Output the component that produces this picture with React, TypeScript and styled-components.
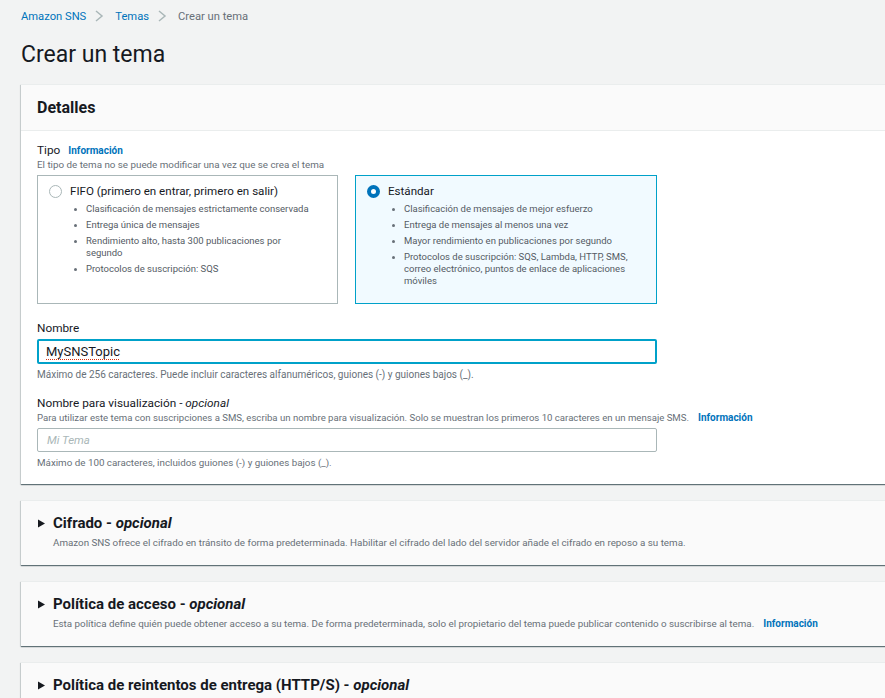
import React from "react";
import styled, { createGlobalStyle } from "styled-components";

const SANS = `"Roboto", "Liberation Sans", sans-serif`;

const GlobalStyle = createGlobalStyle`
  html, body { margin: 0; padding: 0; background: #f2f3f3; overflow: hidden; }
  body { font-family: ${SANS}; color: #16191f; }
  * { box-sizing: border-box; }
`;

const Page = styled.div`
  padding-left: 21px;
  width: 885px;
  overflow: hidden;
`;

const Breadcrumbs = styled.nav`
  display: flex;
  align-items: center;
  height: 31px;
  padding-top: 1px;
  font-size: 11.2px;
`;

const Crumb = styled.span<{ $current?: boolean }>`
  color: ${(p) => (p.$current ? "#687078" : "#0073bb")};
`;

const Chevron = styled.svg`
  width: 10px;
  height: 12px;
  margin: 0 11px 0 8px;
`;

const Title = styled.h1`
  margin: 9px 0 0;
  font-size: 23px;
  font-weight: 400;
  line-height: 30px;
  height: 44px;
  color: #16191f;
`;

const Panel = styled.section`
  width: 900px;
  background: #fff;
  box-shadow: 0 1px 1px 0 rgba(0, 28, 36, 0.5), 1px 1px 1px 0 rgba(0, 28, 36, 0.1),
    -1px 1px 1px 0 rgba(0, 28, 36, 0.1);
  border-top: 1px solid #eaeded;
`;

const PanelHeader = styled.header`
  height: 46px;
  padding: 0 16px;
  display: flex;
  align-items: center;
  background: #fafafa;
  border-bottom: 1px solid #eaeded;
  font-size: 16px;
  font-weight: 700;
`;

const PanelBody = styled.div`
  padding: 12px 16px 15px;
  width: 640px;
`;

const Label = styled.div<{ $gap?: number }>`
  font-size: 11.8px;
  line-height: 15px;
  margin-top: ${(p) => p.$gap ?? 0}px;
  display: flex;
  align-items: baseline;
  gap: 8px;
  em { font-style: italic; }
`;

const Info = styled.span`
  font-family: ${SANS};
  font-size: 10px;
  font-weight: 700;
  color: #0073bb;
`;

const Description = styled.div<{ $size?: number }>`
  font-size: ${(p) => p.$size ?? 9.8}px;
  line-height: 13px;
  color: #687078;
  white-space: nowrap;
  ${Info} { margin-left: 9px; }
`;

const Tiles = styled.div`
  display: grid;
  grid-template-columns: 301px 302px;
  gap: 17px;
  margin-top: 4px;
`;

const Tile = styled.div<{ $selected?: boolean }>`
  border: 1px solid ${(p) => (p.$selected ? "#00a1c9" : "#aab7b8")};
  background: ${(p) => (p.$selected ? "#f1faff" : "#fff")};
  padding: 7px 22px 16px 11px;
`;

const TileHead = styled.div`
  display: flex;
  align-items: center;
  gap: 8px;
  font-size: 11.6px;
  line-height: 16px;
`;

const Radio = styled.span<{ $checked?: boolean }>`
  width: 13px;
  height: 13px;
  border-radius: 50%;
  flex: none;
  background: #fff;
  border: ${(p) => (p.$checked ? "4px solid #0073bb" : "1px solid #aab7b8")};
`;

const Bullets = styled.ul`
  margin: 4px 0 0;
  padding: 0 0 0 37px;
  display: flex;
  flex-direction: column;
  gap: 4px;
  font-size: 9.5px;
  line-height: 12px;
  color: #545b64;
  li::marker { color: #687078; font-size: 9px; }
`;

const Input = styled.div<{ $focused?: boolean; $placeholder?: boolean }>`
  margin-top: ${(p) => (p.$focused ? 3 : 4)}px;
  width: 620px;
  height: ${(p) => (p.$focused ? 25 : 24)}px;
  border: ${(p) => (p.$focused ? "2px solid #00a1c9" : "1px solid #aab7b8")};
  border-radius: 2px;
  background: #fff;
  display: flex;
  align-items: center;
  padding-left: ${(p) => (p.$focused ? 7 : 9)}px;
  font-size: ${(p) => (p.$placeholder ? 11.5 : 13)}px;
  font-style: ${(p) => (p.$placeholder ? "italic" : "normal")};
  color: ${(p) => (p.$placeholder ? "#aab7b8" : "#16191f")};
`;

const Spell = styled.span`
  text-decoration: underline dotted #d13212;
  text-decoration-thickness: 1px;
  text-underline-offset: 3px;
`;

const Hint = styled(Description)<{ $gap?: number }>`
  margin-top: ${(p) => p.$gap ?? 4}px;
`;

const Expander = styled.section`
  margin-top: 16px;
  width: 900px;
  background: #fafafa;
  box-shadow: 0 1px 1px 0 rgba(0, 28, 36, 0.5), 1px 1px 1px 0 rgba(0, 28, 36, 0.1),
    -1px 1px 1px 0 rgba(0, 28, 36, 0.1);
  border-top: 1px solid #eaeded;
  padding: 12px 16px 16px 17px;
`;

const ExpanderTitle = styled.div`
  display: flex;
  align-items: center;
  gap: 8px;
  font-size: 15px;
  font-weight: 700;
  line-height: 20px;
  em { font-style: italic; }
`;

const Caret = styled.svg`
  width: 7px;
  height: 9px;
`;

const ExpanderDesc = styled(Description)`
  margin-top: 3px;
  padding-left: 15px;
`;

const ChevronIcon = () => (
  <Chevron viewBox="0 0 10 12">
    <path d="M2 1 L8 6 L2 11" fill="none" stroke="#aab7b8" strokeWidth="1.5" />
  </Chevron>
);

const CaretIcon = () => (
  <Caret viewBox="0 0 7 9">
    <path d="M0 0.5 L7 4.5 L0 8.5 Z" fill="#16191f" />
  </Caret>
);

export default function App() {
  return (
    <>
      <GlobalStyle />
      <Page>
        <Breadcrumbs>
          <Crumb>Amazon SNS</Crumb>
          <ChevronIcon />
          <Crumb>Temas</Crumb>
          <ChevronIcon />
          <Crumb $current>Crear un tema</Crumb>
        </Breadcrumbs>
        <Title>Crear un tema</Title>

        <Panel>
          <PanelHeader>Detalles</PanelHeader>
          <PanelBody>
            <Label>
              Tipo <Info>Información</Info>
            </Label>
            <Description>El tipo de tema no se puede modificar una vez que se crea el tema</Description>
            <Tiles>
              <Tile>
                <TileHead>
                  <Radio />
                  FIFO (primero en entrar, primero en salir)
                </TileHead>
                <Bullets>
                  <li>Clasificación de mensajes estrictamente conservada</li>
                  <li>Entrega única de mensajes</li>
                  <li>Rendimiento alto, hasta 300 publicaciones por segundo</li>
                  <li>Protocolos de suscripción: SQS</li>
                </Bullets>
              </Tile>
              <Tile $selected>
                <TileHead>
                  <Radio $checked />
                  Estándar
                </TileHead>
                <Bullets>
                  <li>Clasificación de mensajes de mejor esfuerzo</li>
                  <li>Entrega de mensajes al menos una vez</li>
                  <li>Mayor rendimiento en publicaciones por segundo</li>
                  <li>
                    Protocolos de suscripción: SQS, Lambda, HTTP, SMS, correo electrónico, puntos de enlace de
                    aplicaciones móviles
                  </li>
                </Bullets>
              </Tile>
            </Tiles>

            <Label $gap={17}>Nombre</Label>
            <Input $focused>
              <Spell>MySNSTopic</Spell>
            </Input>
            <Hint $size={10}>
              Máximo de 256 caracteres. Puede incluir caracteres alfanuméricos, guiones (-) y guiones bajos (_).
            </Hint>

            <Label $gap={15}>
              <span>
                Nombre para visualización - <em>opcional</em>
              </span>
            </Label>
            <Description $size={9.6}>
              Para utilizar este tema con suscripciones a SMS, escriba un nombre para visualización. Solo se
              muestran los primeros 10 caracteres en un mensaje SMS.
              <Info>Información</Info>
            </Description>
            <Input $placeholder>Mi Tema</Input>
            <Hint>Máximo de 100 caracteres, incluidos guiones (-) y guiones bajos (_).</Hint>
          </PanelBody>
        </Panel>

        <Expander>
          <ExpanderTitle>
            <CaretIcon />
            <span>
              Cifrado - <em>opcional</em>
            </span>
          </ExpanderTitle>
          <ExpanderDesc>
            Amazon SNS ofrece el cifrado en tránsito de forma predeterminada. Habilitar el cifrado del lado del
            servidor añade el cifrado en reposo a su tema.
          </ExpanderDesc>
        </Expander>

        <Expander>
          <ExpanderTitle>
            <CaretIcon />
            <span>
              Política de acceso - <em>opcional</em>
            </span>
          </ExpanderTitle>
          <ExpanderDesc>
            Esta política define quién puede obtener acceso a su tema. De forma predeterminada, solo el
            propietario del tema puede publicar contenido o suscribirse al tema.
            <Info>Información</Info>
          </ExpanderDesc>
        </Expander>

        <Expander>
          <ExpanderTitle>
            <CaretIcon />
            <span>
              Política de reintentos de entrega (HTTP/S) - <em>opcional</em>
            </span>
          </ExpanderTitle>
        </Expander>
      </Page>
    </>
  );
}
